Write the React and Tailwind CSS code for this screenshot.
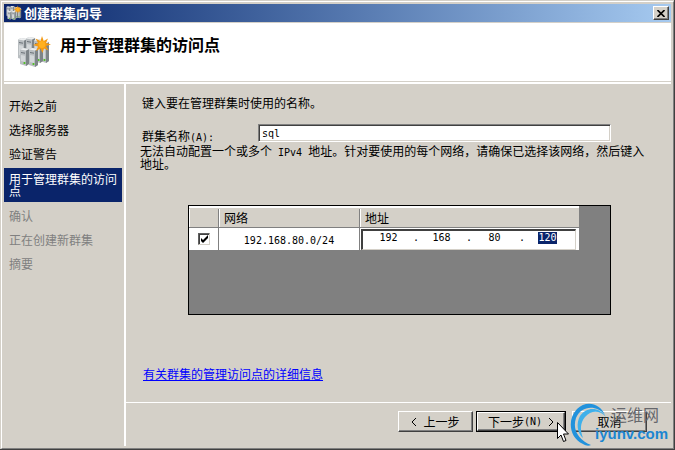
import React from "react";

const steps = [
  { label: "开始之前", state: "done" },
  { label: "选择服务器", state: "done" },
  { label: "验证警告", state: "done" },
  { label: "用于管理群集的访问点", state: "current" },
  { label: "确认", state: "pending" },
  { label: "正在创建新群集", state: "pending" },
  { label: "摘要", state: "pending" },
];

const stepStyles = {
  done: "flex h-6 items-center pl-[5px] text-black",
  current: "my-0.5 mr-0.5 bg-[#0a246a] pt-[5px] pb-[5px] pl-[5px] leading-[12px] text-white",
  pending: "flex h-6 items-center pl-[5px] text-[#808080]",
};

function Mono({ children }) {
  return <span className="font-['DejaVu_Sans_Mono',monospace] text-[10px] leading-none">{children}</span>;
}

function Tower({ x, y, h }) {
  return (
    <g transform={`translate(${x} ${y})`}>
      <path d={`M0 1.5 L3 0 L9 1 L9 ${h - 2} L6 ${h} L0 ${h - 2} Z`} fill="#b9bec1" />
      <path d={`M6 2.5 L9 1 L9 ${h - 2} L6 ${h} Z`} fill="#7d8488" />
      <path d="M0 1.5 L3 0 L9 1 L6 2.5 Z" fill="#eceeef" />
      <path d="M1 4.5 L5 5.2" stroke="#6b7278" strokeWidth="1" />
      <path d={`M1 7 L5 7.7 L5 ${h - 4} L1 ${h - 5} Z`} fill="#d3d7d9" />
      <circle cx="4.5" cy={h - 3} r="1.1" fill="#4bbf1e" />
    </g>
  );
}

function ClusterIcon({ className }) {
  return (
    <svg viewBox="0 0 34 32" className={className} aria-hidden="true">
      <Tower x={1} y={2} h={22} />
      <Tower x={9} y={1} h={22} />
      <Tower x={23} y={5} h={22} />
      <Tower x={17} y={3} h={24} />
      <Tower x={3} y={12} h={18} />
      <Tower x={12} y={12} h={19} />
      <path
        d="M25 0 L26.7 5 L31 2.5 L29 7 L34 8.5 L29 10 L31.5 14.5 L27 12.5 L25.5 17 L23.5 12.5 L19 15 L21 10.5 L16 9 L21 7 L18.5 2.5 L23.5 5 Z"
        fill="#f59a12"
      />
      <circle cx="25" cy="8.5" r="3.4" fill="#ffb01f" />
    </svg>
  );
}

function PushButton({ children, primary }) {
  const bevel =
    "flex h-full w-full items-center justify-center border border-t-white border-l-white border-r-[#404040] border-b-[#404040] shadow-[inset_-1px_-1px_0_#808080]";
  return (
    <button
      type="button"
      className={
        primary
          ? "h-[21px] w-[90px] border border-black bg-[#d4d0c8]"
          : "h-[21px] w-[75px] bg-[#d4d0c8]"
      }
    >
      <span className={bevel}>{children}</span>
    </button>
  );
}

function Chevron({ d }) {
  return (
    <svg viewBox="0 0 6 10" className="h-[10px] w-[6px]" fill="none" stroke="black" aria-hidden="true">
      <path d={d} />
    </svg>
  );
}

function AddressField() {
  const parts = ["192", "168", "80", "120"];
  return (
    <div className="mr-[3px] ml-px flex h-[21px] items-start border-t-2 border-r border-b border-l-2 border-t-[#404040] border-r-[#d4d0c8] border-b-[#d4d0c8] border-l-[#404040] bg-white pt-px pl-[3px] font-['DejaVu_Sans_Mono',monospace] text-[10px] leading-[12px]">
      {parts.map((part, i) => (
        <React.Fragment key={part}>
          {i > 0 && <span className="w-2 text-right">.</span>}
          <span className="flex w-[45px] justify-center">
            <input
              aria-label={`地址 ${i + 1}`}
              defaultValue={part}
              className={
                i === 3
                  ? "h-3 w-[19px] bg-[#0a246a] text-center text-white outline-none"
                  : "h-3 w-[19px] bg-white text-center text-black outline-none"
              }
            />
          </span>
        </React.Fragment>
      ))}
    </div>
  );
}

function NetworkTable() {
  const th = "h-[22px] border-b border-[#808080] p-0 text-left font-normal";
  return (
    <div className="mr-[60px] ml-[62px] h-[110px] border border-black bg-[#808080]">
      <table className="w-[390px] table-fixed border-separate border-spacing-0 leading-[18px]">
        <colgroup>
          <col className="w-[30px]" />
          <col className="w-[141px]" />
          <col />
        </colgroup>
        <thead>
          <tr className="bg-[#d4d0c8] shadow-[inset_0_2px_0_white]">
            <th className={th}>
              <div className="mt-[3px] h-[18px] border-r border-l border-r-[#808080] border-l-white" />
            </th>
            <th className={th}>
              <div className="mt-[3px] h-[18px] border-r border-l border-r-[#808080] border-l-white pl-1">网络</div>
            </th>
            <th className={th}>
              <div className="mt-[3px] h-[18px] border-l border-l-white pl-1">地址</div>
            </th>
          </tr>
        </thead>
        <tbody>
          <tr className="bg-white">
            <td className="h-[22px] border-r border-[#808080] p-0">
              <label className="relative mx-auto block h-[12px] w-[12px]">
                <input
                  type="checkbox"
                  defaultChecked
                  aria-label="选择网络 192.168.80.0/24"
                  className="peer block h-[12px] w-[12px] appearance-none border border-t-[#606060] border-r-[#d4d0c8] border-b-[#d4d0c8] border-l-[#606060] bg-white shadow-[inset_1px_1px_0_#404040]"
                />
                <svg
                  viewBox="0 0 12 12"
                  className="pointer-events-none absolute top-0 left-0 hidden h-3 w-3 peer-checked:block"
                  aria-hidden="true"
                >
                  <path d="M3 5v3l2 2 5-5V2L5 7Z" />
                </svg>
              </label>
            </td>
            <td className="h-[22px] border-r border-[#808080] p-0 text-center">
              <Mono>192.168.80.0/24</Mono>
            </td>
            <td className="h-[22px] p-0">
              <AddressField />
            </td>
          </tr>
        </tbody>
      </table>
    </div>
  );
}

function Watermark() {
  return (
    <div className="pointer-events-none absolute right-[3px] bottom-[2px] h-[45px] w-[102px]">
      <svg viewBox="0 0 102 45" className="absolute inset-0 h-full w-full" aria-hidden="true">
        <path
          d="M36 13C31 1 17-2 8 7C-2 17 0 36 14 42C17 44 20 44 22 43C10 38 3 28 7 16C12 4 27 2 36 13Z"
          fill="#2292dc"
        />
        <path d="M37 15C30 4 17 5 11 14C7 21 8 31 14 36C11 28 11 21 16 15C22 8 31 8 37 15Z" fill="#3fb0ea" />
      </svg>
      <span className="absolute top-[3px] left-[42px] text-[16px] leading-[18px] whitespace-nowrap text-[#66676c]">
        运维网
      </span>
      <span className="absolute top-[23px] left-[26px] font-['Liberation_Sans',Arial,sans-serif] text-[15px] leading-[18px] font-bold whitespace-nowrap text-[#1c86d1]">
        iyunv.com
      </span>
    </div>
  );
}

export default function App() {
  return (
    <div className="relative flex min-h-screen flex-col border-r border-b border-[#404040] bg-[#d4d0c8] font-['Noto_Sans_CJK_SC',sans-serif] text-[12px] text-black">
      <div className="ml-px mt-px flex grow flex-col border border-t-white border-r-[#808080] border-b-[#808080] border-l-white pt-[2px] pr-[2px] pb-[2px] pl-[2px]">
        <header className="flex h-[18px] items-center bg-linear-to-r from-[#0a246a] to-[#a6caf0] pr-[2px] pl-[2px]">
          <ClusterIcon className="h-4 w-4" />
          <h1 className="ml-[2px] grow text-[13px] leading-[18px] font-bold text-white">创建群集向导</h1>
          <button
            type="button"
            aria-label="关闭"
            className="flex h-[14px] w-4 items-center justify-center border border-t-white border-r-[#404040] border-b-[#404040] border-l-white bg-[#d4d0c8] shadow-[inset_-1px_-1px_0_#808080]"
          >
            <svg viewBox="0 0 8 7" className="h-[7px] w-2" stroke="black" strokeWidth="1.6" aria-hidden="true">
              <path d="M0.5 0 7.5 7M7.5 0 0.5 7" />
            </svg>
          </button>
        </header>

        <div className="mt-px flex h-[58px] items-start bg-white pl-[13px]">
          <ClusterIcon className="mt-[13px] h-8 w-[34px]" />
          <h2 className="mt-[10px] ml-[9px] text-[16px] leading-[22px] font-bold">用于管理群集的访问点</h2>
        </div>
        <div className="mt-px h-[2px] bg-white" />

        <div className="flex grow">
          <nav className="w-[122px] shrink-0 border-r-2 border-white pt-[10px]">
            <ol>
              {steps.map((step) => (
                <li
                  key={step.label}
                  aria-current={step.state === "current" ? "step" : undefined}
                  className={stepStyles[step.state]}
                >
                  {step.label}
                </li>
              ))}
            </ol>
          </nav>

          <main className="flex min-w-0 grow flex-col">
            <p className="mt-[10px] pl-4 leading-[18px]">键入要在管理群集时使用的名称。</p>
            <div className="mt-3 mr-[60px] ml-4 flex h-[18px]">
              <label htmlFor="cluster-name" className="mt-[3px] w-[116px] shrink-0 leading-[18px]">
                群集名称<Mono>(A):</Mono>
              </label>
              <input
                id="cluster-name"
                defaultValue="sql"
                className="h-[18px] min-w-0 grow border border-t-[#808080] border-r-white border-b-white border-l-[#808080] bg-white pl-[3px] font-['DejaVu_Sans_Mono',monospace] text-[10px] shadow-[inset_1px_1px_0_#404040,inset_-1px_-1px_0_#d4d0c8] outline-none"
              />
            </div>
            <p className="mt-[3px] mr-[26px] ml-[14px] leading-[12px]">
              无法自动配置一个或多个<Mono> IPv4 </Mono>地址。针对要使用的每个网络，请确保已选择该网络，然后键入地址。
            </p>
            <div className="mt-[35px]">
              <NetworkTable />
            </div>
            <div className="mt-[50px] pl-[17px] leading-[18px]">
              <a href="#details" className="text-[#0000ff] underline">
                有关群集的管理访问点的详细信息
              </a>
            </div>
            <footer className="mt-auto flex h-[44px] justify-end border-t border-white pt-2 pr-6">
              <PushButton>
                <Chevron d="M5 1 1 5 5 9" />
                <span className="ml-[6px]">上一步</span>
              </PushButton>
              <div className="ml-[3px]">
                <PushButton primary>
                  <span>下一步</span>
                  <Mono>(N)</Mono>
                  <span className="ml-[6px] flex">
                    <Chevron d="M1 1 5 5 1 9" />
                  </span>
                </PushButton>
              </div>
              <div className="ml-[6px]">
                <PushButton>取消</PushButton>
              </div>
            </footer>
          </main>
        </div>
      </div>

      <Watermark />
      <svg
        viewBox="0 0 12 21"
        className="pointer-events-none absolute right-[105px] bottom-[6px] h-[21px] w-3"
        aria-hidden="true"
      >
        <path d="M0.5 0.5V16.5L4 13L6.5 19.5L9 18.5L6.5 12H11.5Z" fill="white" stroke="black" />
      </svg>
    </div>
  );
}
